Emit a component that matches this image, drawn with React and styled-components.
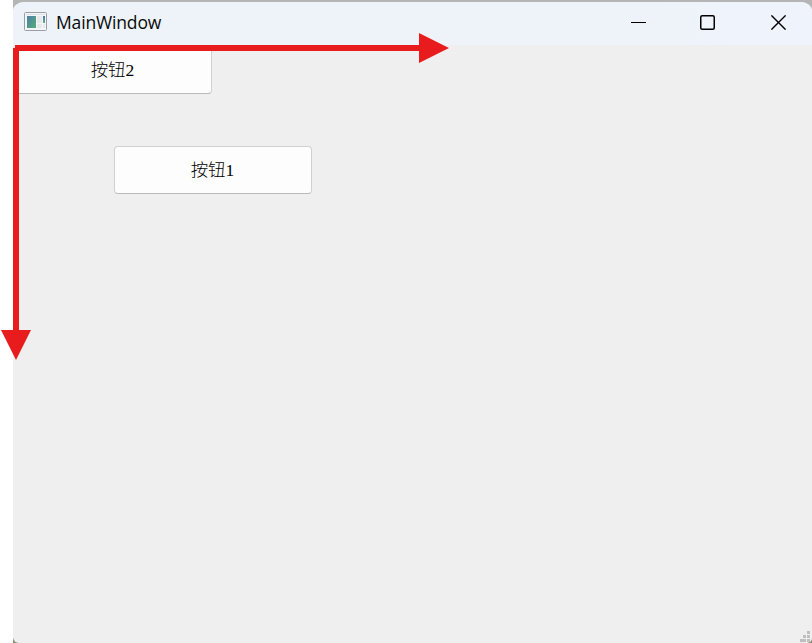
import React from "react";
import styled, { createGlobalStyle } from "styled-components";

const GlobalStyle = createGlobalStyle`
  * { box-sizing: border-box; }
  body { margin: 0; background: #fff; overflow: hidden; }
`;

const Page = styled.div`
  position: relative;
  width: 812px;
  height: 643px;
  padding-left: 13px;
  background: #fff;
  overflow: hidden;
`;

const Backdrop = styled.div`
  width: 799px;
  height: 643px;
  background: linear-gradient(#b5b5b5 0 20px, #8d8d72 20px);
`;

const Window = styled.main`
  display: flex;
  flex-direction: column;
  width: 799px;
  height: 643px;
  border-top: 2px solid #b5b5b5;
  border-radius: 11px 11px 5px 6px;
  background: #efefef;
  overflow: hidden;
`;

const TitleBar = styled.header`
  display: flex;
  align-items: center;
  flex: none;
  height: 43px;
  padding-left: 11px;
  background: linear-gradient(90deg, #edf3f8 60%, #eff3fb 90%);
`;

const AppIcon = styled.svg`
  display: block;
  flex: none;
  margin-top: -4px;
`;

const Title = styled.h1`
  flex: 1;
  margin: -3px 0 0 9px;
  font: 400 17.5px/24px "Open Sans", "Noto Sans", sans-serif;
  letter-spacing: -0.15px;
  color: #0a0a0a;
`;

const Controls = styled.div`
  display: flex;
  height: 100%;
`;

const ControlButton = styled.button`
  display: flex;
  align-items: center;
  justify-content: center;
  width: ${(p) => p.$width}px;
  height: 41px;
  padding: 0;
  border: 0;
  background: transparent;
`;

const ClientArea = styled.section`
  display: flex;
  flex-direction: column;
  align-items: flex-start;
  flex: 1;
  gap: 52px;
  padding: 1px;
`;

const PushButton = styled.button`
  width: 198px;
  height: 48px;
  margin-left: ${(p) => p.$indent}px;
  padding: 0 1px 0 0;
  border: 1px solid #d0d0d0;
  border-bottom-color: #b9b9b9;
  border-radius: 4px;
  background: #fdfdfd;
  color: #000;
  font: 300 17.5px/24px "Liberation Serif", "Noto Sans CJK SC", serif;
`;

const SizeGrip = styled.svg`
  display: block;
  margin: auto 0 0 auto;
`;

const AxisOverlay = styled.svg`
  position: absolute;
  left: 0;
  top: 0;
  pointer-events: none;
`;

const gripDots = [
  [7, 0],
  [3, 4],
  [7, 4],
  [0, 8],
  [3, 8],
  [7, 8],
];

export default function App() {
  return (
    <Page>
      <GlobalStyle />
      <Backdrop>
        <Window>
          <TitleBar>
            <AppIcon width="23" height="19" viewBox="0 0 23 19">
              <defs>
                <linearGradient id="screen" x1="0" y1="0" x2="1" y2="1">
                  <stop offset="0" stopColor="#4e80a6" />
                  <stop offset="1" stopColor="#57ad78" />
                </linearGradient>
                <linearGradient id="strip" x1="0" y1="0" x2="0" y2="1">
                  <stop offset="0" stopColor="#4777ad" />
                  <stop offset="1" stopColor="#61ae7e" />
                </linearGradient>
              </defs>
              <rect x=".5" y=".5" width="22" height="18" rx="1" fill="#f4f5f7" stroke="#989ea6" />
              <path d="M2 2.5h19" stroke="#dfe2e6" />
              <rect x="3" y="4" width="9" height="12" fill="url(#screen)" />
              <rect x="13" y="4" width="5" height="7" fill="#e7e8e9" />
              <rect x="13" y="12" width="5" height="4" fill="#e7e8e9" />
              <rect x="19" y="4" width="2" height="7" fill="url(#strip)" />
              <rect x="19" y="12" width="2" height="4" fill="#e7e8e9" />
            </AppIcon>
            <Title>MainWindow</Title>
            <Controls>
              <ControlButton $width={63} aria-label="Minimize">
                <svg width="15" height="15" viewBox="0 0 15 15">
                  <path d="M0 7.5h15" stroke="#000" />
                </svg>
              </ControlButton>
              <ControlButton $width={75} aria-label="Maximize">
                <svg width="15" height="15" viewBox="0 0 15 15">
                  <rect x=".75" y=".75" width="13.5" height="13.5" rx="1.5" fill="none" stroke="#000" strokeWidth="1.5" />
                </svg>
              </ControlButton>
              <ControlButton $width={67} aria-label="Close">
                <svg width="15" height="15" viewBox="0 0 15 15">
                  <path d="M.4 .4l14.2 14.2M14.6 .4L.4 14.6" stroke="#000" strokeWidth="1.4" />
                </svg>
              </ControlButton>
            </Controls>
          </TitleBar>
          <ClientArea>
            <PushButton $indent={0}>按钮2</PushButton>
            <PushButton $indent={100}>按钮1</PushButton>
            <SizeGrip width="11" height="11" viewBox="0 0 11 11">
              {gripDots.map(([x, y]) => (
                <rect key={`${x}-${y}`} x={x} y={y} width="3" height="3" fill="#bfbfbf" />
              ))}
            </SizeGrip>
          </ClientArea>
        </Window>
      </Backdrop>
      <AxisOverlay width="812" height="643" viewBox="0 0 812 643" fill="#e81c1c">
        <path d="M15 45H419V33L449 48L419 63V51H15Z" />
        <path d="M13 48H19V330H31L16 360L1 330H13Z" />
      </AxisOverlay>
    </Page>
  );
}
